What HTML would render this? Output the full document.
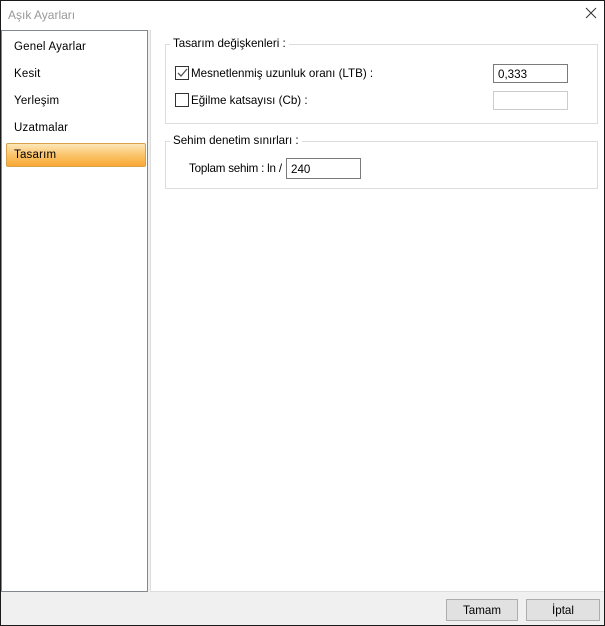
<!DOCTYPE html>
<html><head><style>
body{margin:0;width:605px;height:626px;overflow:hidden;font-family:"Liberation Sans",sans-serif;font-size:11.6px;color:#000;}
.win{position:absolute;left:0;top:0;width:603px;height:624px;border:1px solid #1a1a1a;background:#f0f0f0;}
.title{position:absolute;left:0;top:0;width:603px;height:29px;background:#fff;}
.title span{position:absolute;left:7px;top:7px;font-size:12px;color:#999;}
.x{position:absolute;left:584px;top:6px;}
.left{position:absolute;left:0;top:29px;width:145px;height:560px;border:1px solid #828790;background:#fff;}
.item{position:absolute;left:12px;font-size:11.5px;letter-spacing:0.2px;}
.sel{position:absolute;left:4px;top:112px;width:138px;height:22px;border:1px solid #d8a24a;border-radius:2px;background:linear-gradient(#fde7b8,#fbc46a 50%,#f9a835);}
.right{position:absolute;left:149px;top:29px;width:453px;height:561px;border-left:1px solid #ddd;border-bottom:1px solid #ddd;background:#fff;}
.grp{position:absolute;border:1px solid #dcdcdc;}
.grp .lg{position:absolute;left:4px;top:-8px;background:#fff;padding:0 3px;white-space:nowrap;}
.cb{position:absolute;width:12px;height:12px;border:1px solid #333;background:#fff;}
.tb{position:absolute;border:1px solid #7a7a7a;background:#fff;height:19px;line-height:19px;padding-left:4px;box-sizing:border-box;}
.btn{position:absolute;top:598px;height:22px;border:1px solid #adadad;background:#e1e1e1;text-align:center;line-height:21px;box-sizing:border-box;}
.t{position:absolute;white-space:nowrap;}
</style></head><body>
<div class="win">
<div class="title"><span>Aşık Ayarları</span>
<svg class="x" width="12" height="12"><path d="M1 1L11 11M11 1L1 11" stroke="#333" stroke-width="1"/></svg></div>
<div class="left">
<div class="item" style="top:10px">Genel Ayarlar</div>
<div class="item" style="top:37px">Kesit</div>
<div class="item" style="top:64px">Yerleşim</div>
<div class="item" style="top:91px">Uzatmalar</div>
<div class="sel"></div>
<div class="item" style="top:118px">Tasarım</div>
</div>
<div class="right">
<div class="grp" style="left:14px;top:14px;width:431px;height:78px">
<div class="lg">Tasarım değişkenleri :</div>
<div class="cb" style="left:9px;top:21px"><svg width="12" height="12" style="position:absolute;left:0;top:0"><path d="M2 6L5 9L11 2" stroke="#555" stroke-width="1.3" fill="none"/></svg></div>
<div class="t" style="left:25px;top:22px">Mesnetlenmiş uzunluk oranı (LTB) :</div>
<div class="tb" style="left:327px;top:19px;width:75px">0,333</div>
<div class="cb" style="left:9px;top:48px"></div>
<div class="t" style="left:25px;top:49px">Eğilme katsayısı (Cb) :</div>
<div class="tb" style="left:327px;top:46px;width:75px;border-color:#ccc"></div>
</div>
<div class="grp" style="left:14px;top:111px;width:431px;height:46px">
<div class="lg">Sehim denetim sınırları :</div>
<div class="t" style="left:23px;top:20px;letter-spacing:-0.2px">Toplam sehim : ln /</div>
<div class="tb" style="left:120px;top:16px;width:75px;height:21px;line-height:21px">240</div>
</div>
</div>
<div class="btn" style="left:445px;width:72px">Tamam</div>
<div class="btn" style="left:525px;width:74px">İptal</div>
</div>
</body></html>
